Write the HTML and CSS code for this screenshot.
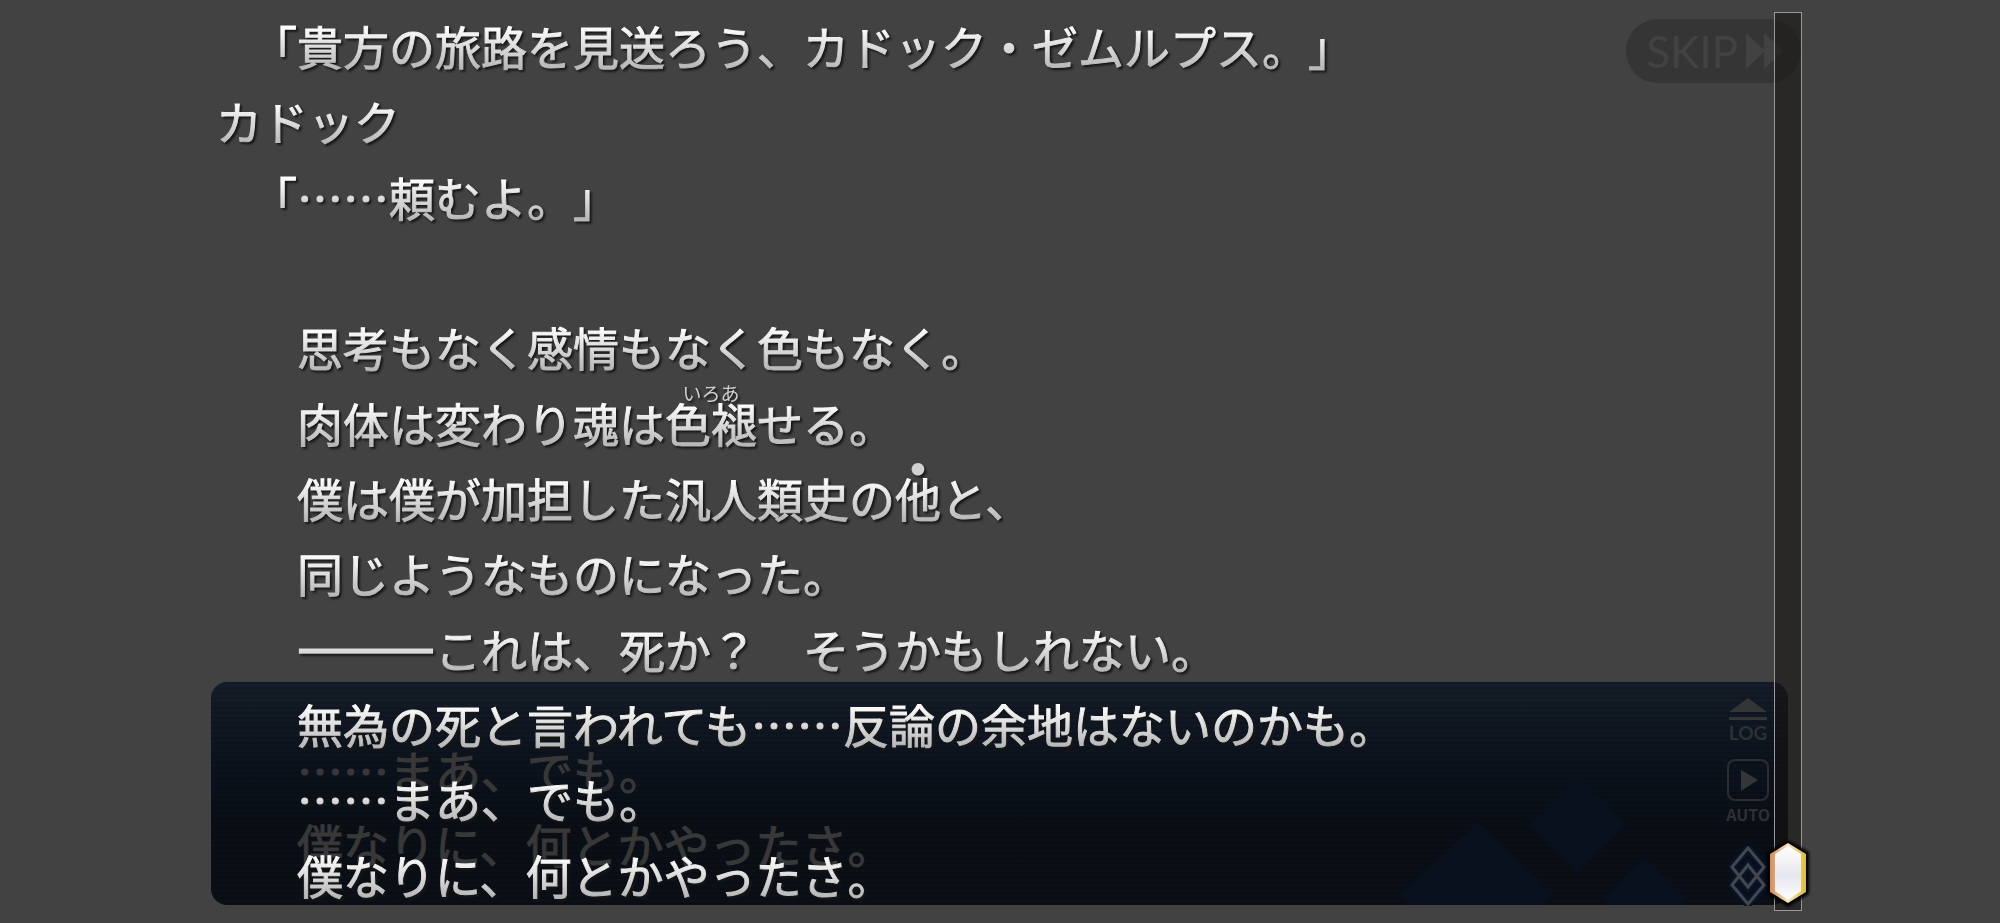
FILE: index.html
```
<!DOCTYPE html>
<html lang="ja">
<head>
  <meta charset="UTF-8">
  <title>LOG</title>
  <link rel="stylesheet" href="styles.css">
</head>
<body>
  <main class="stage">
    <div class="skip-layer">
      <button type="button" class="skip">
        SKIP
        <svg width="38" height="36" viewBox="0 0 38 36"><path d="M0 0L18 17V0L38 18L18 36V19L0 36Z"/></svg>
      </button>
    </div>

    <section class="panel">
      <svg class="panel-pattern" width="300" height="130" viewBox="0 0 300 130">
        <path d="M182 2L230 50L182 98L134 50ZM82 47L158 119L147 130H16L5 119ZM249 83L292 123L286 130H212L206 123Z"/>
      </svg>
      <div class="current">
        <p>……まあ、でも。</p>
        <p>僕なりに、何とかやったさ。</p>
      </div>
      <div class="tools">
        <button type="button" class="tool">
          <svg width="38" height="23" viewBox="0 0 38 23"><path d="M19 0L38 14H0ZM0 19H38V22H0Z"/></svg>
          LOG
        </button>
        <button type="button" class="tool tool-auto">
          <svg width="42" height="42" viewBox="0 0 42 42"><rect class="line" x="1" y="1" width="40" height="40" rx="7"/><path d="M14 11L31 21L14 32Z"/></svg>
          AUTO
        </button>
        <button type="button" class="tool" aria-label="MENU">
          <svg class="gem" width="38" height="60" viewBox="0 0 38 60"><path class="glow" d="M19 2L35 21L19 41L3 21ZM19 19L35 39L19 58L3 39Z"/><path class="line" d="M19 2L35 21L19 41L3 21ZM19 19L35 39L19 58L3 39Z"/></svg>
        </button>
      </div>
    </section>

    <!-- backlog text, one grid row per line -->
    <section class="log">
      <p class="quote">「貴方の旅路を見送ろう、カドック・ゼムルプス。」</p>
      <p class="name">カドック</p>
      <p class="quote">「……頼むよ。」</p>
      <p></p>
      <p>思考もなく感情もなく色もなく。</p>
      <p>肉体は変わり魂は<ruby>色褪<rt>いろあ</rt></ruby>せる。</p>
      <p>僕は僕が加担した汎人類史の<ruby>他<rt class="dot">●</rt></ruby>と、</p>
      <p>同じようなものになった。</p>
      <p><b>―――</b>これは、死か？　そうかもしれない。</p>
      <p>無為の死と言われても……反論の余地はないのかも。</p>
      <p>……まあ、でも。</p>
      <p>僕なりに、何とかやったさ。</p>
    </section>

    <div class="scroll-layer">
      <input type="range" class="scroll" min="0" max="100" value="100" aria-label="スクロール">
    </div>
  </main>
</body>
</html>
```
FILE: styles.css
```
* {
  box-sizing: border-box;
}
body {
  margin: 0;
  background: #424242;
  font-family: "Noto Sans CJK JP", sans-serif;
  font-size: 46px;
  line-height: 46px;
  text-spacing-trim: space-all;
}
p {
  margin: 0;
}
button {
  border: 0;
  padding: 0;
  background: none;
  font-family: Lato, sans-serif;
}
/* every layer shares the same grid cell */
.stage {
  display: grid;
  grid-template: minmax(100vh, auto) / minmax(0, 1fr);
  overflow: hidden;
}
.stage > * {
  grid-area: 1 / 1;
}

/* skip button */
.skip-layer {
  display: flex;
  justify-content: flex-end;
  align-items: flex-start;
  padding: 19px 199px 0 0;
}
.skip {
  display: flex;
  align-items: center;
  gap: 8px;
  height: 64px;
  padding: 0 17px 0 20px;
  border-radius: 32px;
  background: #353535;
  color: #424242;
  font-size: 44px;
}
.skip svg {
  fill: #424242;
}

/* message window */
.panel {
  position: relative;
  display: flex;
  justify-content: space-between;
  align-self: end;
  margin: 0 212px 18px 211px;
  padding: 16px 18px 0 86px;
  height: 223px;
  border-radius: 16px;
  background:
    repeating-linear-gradient(rgba(0, 0, 0, 0.12) 0 2px, transparent 2px 5px),
    linear-gradient(#151d29, #0c131d 35%, #0a0f16 65%, #0b1017);
}
.panel-pattern {
  position: absolute;
  right: 92px;
  bottom: 0;
  fill: #09111f;
}
.current {
  display: flex;
  flex-direction: column;
  gap: 28px;
  padding-top: 48px;
  color: #383838;
  -webkit-text-stroke: 1px #383838;
}
.tools {
  position: relative;
  display: flex;
  flex-direction: column;
  align-items: center;
}
.tool {
  display: flex;
  flex-direction: column;
  align-items: center;
  color: #2e3033;
  font-size: 19px;
  font-weight: bold;
  line-height: 24px;
}
.tool svg {
  fill: #343537;
}
.tool-auto {
  margin: 14px 0 19px;
  font-family: "Noto Sans CJK JP", sans-serif;
  font-size: 16px;
  line-height: 26px;
}
.tool .line {
  fill: none;
  stroke: #2b2d30;
  stroke-width: 2;
}
.tool .gem .line {
  stroke: #44484c;
  stroke-width: 3;
}
.tool .glow {
  fill: none;
  stroke: #08142b;
  stroke-width: 8;
}

/* backlog */
.log {
  position: relative;
  display: grid;
  grid-template-rows: repeat(12, 1fr);
  align-items: center;
  justify-items: start;
  padding: 10px 240px 9px 297px;
}
.log p,
.log ruby {
  padding-bottom: 5px;
  white-space: nowrap;
  color: transparent;
  background: linear-gradient(#fff 10%, #b4b4b4 95%);
  background-clip: text;
  -webkit-background-clip: text;
  -webkit-text-stroke: 1px transparent;
}
.log p {
  filter: drop-shadow(2px 2px 1px #161616);
}
.log .quote {
  margin-left: -46px;
}
.log .name {
  margin-left: -81px;
}
.log b {
  -webkit-text-stroke-width: 3px;
}
.log ruby {
  display: inline-block;
  position: relative;
  margin-bottom: -5px;
}
rt {
  position: absolute;
  left: 0;
  right: 0;
  bottom: 47px;
  color: #d0d0d0;
  font-size: 19px;
  line-height: 20px;
  text-align: center;
}
rt.dot {
  font-size: 14px;
}

/* scrollbar */
.scroll-layer {
  display: flex;
  justify-content: flex-end;
  padding: 12px 198px 12px 0;
  pointer-events: none;
}
.scroll {
  position: relative;
  appearance: none;
  -webkit-appearance: none;
  writing-mode: vertical-lr;
  width: 28px;
  height: auto;
  margin: 0;
  border: 1px solid #999;
  background: rgba(24, 18, 19, 0.55);
  pointer-events: auto;
}
.scroll::-webkit-slider-thumb {
  -webkit-appearance: none;
  width: 48px;
  height: 74px;
  background: url("data:image/svg+xml,%3Csvg xmlns='http://www.w3.org/2000/svg' viewBox='0 0 48 74'%3E%3Cdefs%3E%3ClinearGradient id='e' x2='1' y2='0'%3E%3Cstop stop-color='%23d88a55'/%3E%3Cstop offset='.5' stop-color='%23f6e6c0'/%3E%3Cstop offset='1' stop-color='%23dcbc35'/%3E%3C/linearGradient%3E%3ClinearGradient id='f' x2='0' y2='1'%3E%3Cstop stop-color='%23fff'/%3E%3Cstop offset='.55' stop-color='%23e6e6ee'/%3E%3Cstop offset='1' stop-color='%23fff'/%3E%3C/linearGradient%3E%3Cfilter id='b' x='-.3' y='-.3' width='1.6' height='1.6'%3E%3CfeGaussianBlur stdDeviation='1.5'/%3E%3C/filter%3E%3C/defs%3E%3Cpath d='M24 4L45 16V58L24 71L3 58V16Z' fill='%23000' filter='url(%23b)'/%3E%3Cpath d='M24 7L42 18V56L24 67L6 56V18Z' fill='url(%23e)'/%3E%3Cpath d='M24 10L37 18V55L24 64L11 55V18Z' fill='url(%23f)'/%3E%3C/svg%3E") center / 48px 74px no-repeat;
}
```
